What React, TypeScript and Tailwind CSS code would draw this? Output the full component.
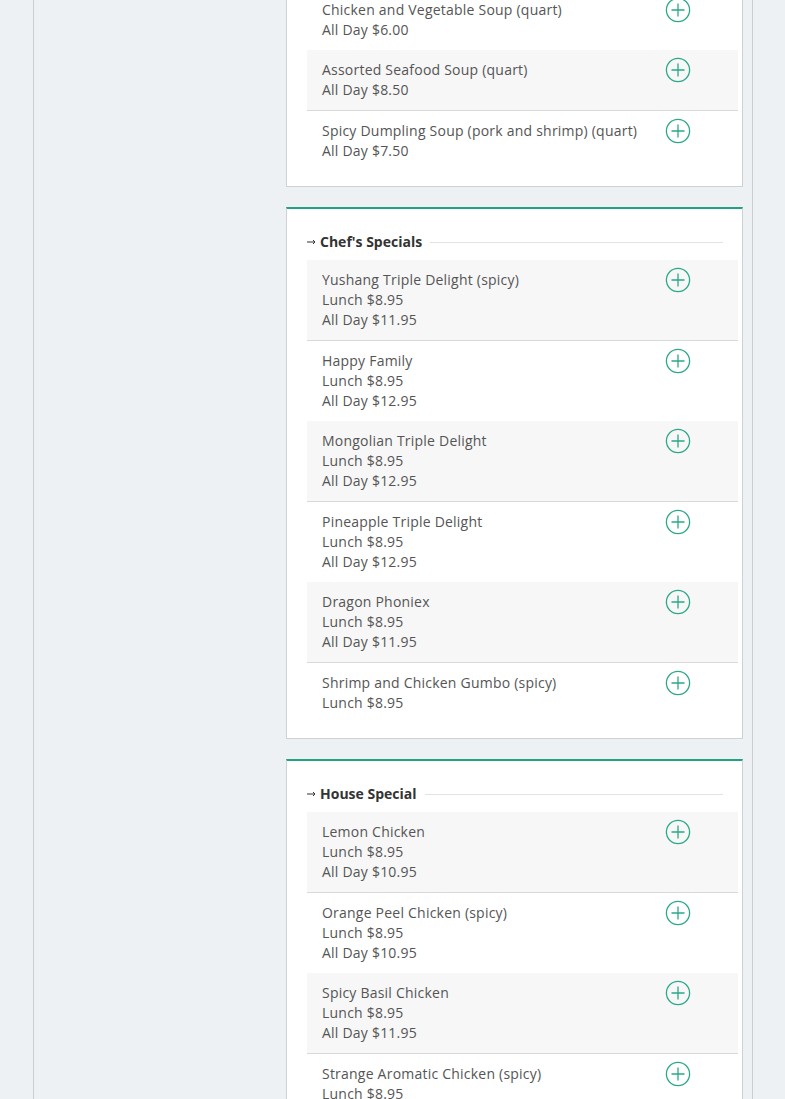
type MenuItem = {
  name: string;
  prices: string[];
};

type Section = {
  title?: string;
  items: MenuItem[];
  // whether the first visible row is shaded
  startShaded: boolean;
};

const sections: Section[] = [
  {
    startShaded: false,
    items: [
      { name: "Chicken and Vegetable Soup (quart)", prices: ["All Day $6.00"] },
      { name: "Assorted Seafood Soup (quart)", prices: ["All Day $8.50"] },
      {
        name: "Spicy Dumpling Soup (pork and shrimp) (quart)",
        prices: ["All Day $7.50"],
      },
    ],
  },
  {
    title: "Chef's Specials",
    startShaded: true,
    items: [
      {
        name: "Yushang Triple Delight (spicy)",
        prices: ["Lunch $8.95", "All Day $11.95"],
      },
      { name: "Happy Family", prices: ["Lunch $8.95", "All Day $12.95"] },
      {
        name: "Mongolian Triple Delight",
        prices: ["Lunch $8.95", "All Day $12.95"],
      },
      {
        name: "Pineapple Triple Delight",
        prices: ["Lunch $8.95", "All Day $12.95"],
      },
      { name: "Dragon Phoniex", prices: ["Lunch $8.95", "All Day $11.95"] },
      { name: "Shrimp and Chicken Gumbo (spicy)", prices: ["Lunch $8.95"] },
    ],
  },
  {
    title: "House Special",
    startShaded: true,
    items: [
      { name: "Lemon Chicken", prices: ["Lunch $8.95", "All Day $10.95"] },
      {
        name: "Orange Peel Chicken (spicy)",
        prices: ["Lunch $8.95", "All Day $10.95"],
      },
      {
        name: "Spicy Basil Chicken",
        prices: ["Lunch $8.95", "All Day $11.95"],
      },
      {
        name: "Strange Aromatic Chicken (spicy)",
        prices: ["Lunch $8.95", "All Day $10.95"],
      },
    ],
  },
];

function PlusIcon() {
  return (
    <svg width="26" height="26" viewBox="0 0 26 26" className="shrink-0">
      <circle cx="13" cy="13" r="11.6" fill="none" stroke="#2aa888" strokeWidth="1.3" />
      <path d="M13 6.5v13M6.5 13h13" stroke="#2aa888" strokeWidth="1.3" />
    </svg>
  );
}

function ArrowIcon() {
  return (
    <svg width="9" height="6" viewBox="0 0 9 6" className="mr-[4px] shrink-0">
      <path d="M0 3h8M6 1l2 2-2 2" fill="none" stroke="#333" strokeWidth="1" />
    </svg>
  );
}

function Row({ item, shaded }: { item: MenuItem; shaded: boolean }) {
  return (
    <div
      className={
        "flex items-start justify-between pt-[10px] pr-[47px] pb-[10px] pl-[15px] " +
        (shaded ? "border-b border-[#d9d9d9] bg-[#f7f7f7]" : "bg-white")
      }
    >
      <div className="flex flex-col text-[14px] leading-[20px] tracking-[0.22px] text-[#555]">
        <span>{item.name}</span>
        {item.prices.map((p) => (
          <span key={p}>{p}</span>
        ))}
      </div>
      <div className="-mt-[3px]">
        <PlusIcon />
      </div>
    </div>
  );
}

function SectionCard({ section, first }: { section: Section; first: boolean }) {
  return (
    <div
      className={
        "border-x border-b border-[#cfd2d4] bg-white pb-[15px] pl-[20px] pr-[4px] " +
        (first ? "-mt-[10px]" : "mt-5 border-t-2 border-t-[#22a283] pt-[23px]")
      }
    >
      {section.title && (
        <div className="mb-[8px] flex items-center pr-[15px]">
          <ArrowIcon />
          <h3 className="text-[14px] leading-[20px] font-bold text-[#333]">
            {section.title}
          </h3>
          <div className="ml-[8px] h-px flex-1 bg-[#e2e2e2]" />
        </div>
      )}
      <div className="flex flex-col">
        {section.items.map((item, i) => (
          <Row
            key={item.name}
            item={item}
            shaded={section.startShaded ? i % 2 === 0 : i % 2 === 1}
          />
        ))}
      </div>
    </div>
  );
}

export default function App() {
  return (
    <div
      className="h-[1099px] overflow-hidden bg-[#edf1f4]"
      style={{ fontFamily: '"Open Sans", "Liberation Sans", sans-serif' }}
    >
      <div className="ml-[33px] flex h-full w-[720px] border-x border-[#c9cdd0] pr-[8px]">
        <aside className="w-[252px] shrink-0" />
        <main className="flex w-[457px] flex-col">
          {sections.map((s, i) => (
            <SectionCard key={i} section={s} first={i === 0} />
          ))}
        </main>
      </div>
    </div>
  );
}
